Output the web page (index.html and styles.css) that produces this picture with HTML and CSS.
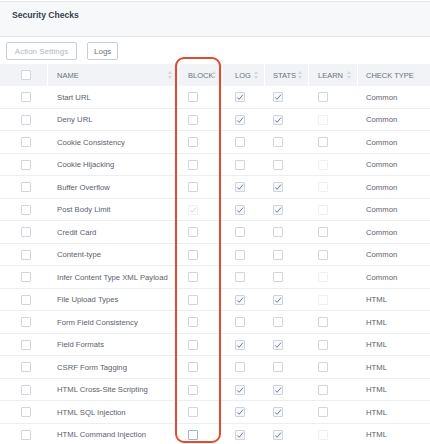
FILE: index.html
```html
<!DOCTYPE html>
<html>
<head>
<meta charset="utf-8">
<link rel="stylesheet" href="styles.css">
</head>
<body>
<div class="page">
  <div class="titlebar">Security Checks</div>
  <div class="toolbar">
    <button class="btn btn-disabled">Action Settings</button>
    <button class="btn">Logs</button>
  </div>
  <div class="table">
    <div class="row head">
      <div class="cell c0"><span class="cb"></span></div>
      <div class="cell cn">NAME<span class="sort"></span></div>
      <div class="cell cb1">BLOCK<span class="sort"></span></div>
      <div class="cell cl">LOG<span class="sort"></span></div>
      <div class="cell cs">STATS<span class="sort"></span></div>
      <div class="cell ce">LEARN<span class="sort"></span></div>
      <div class="cell ct">CHECK TYPE</div>
    </div>
    <div id="rows"></div>
  </div>
  <div class="highlight"></div>
</div>
<script src="script.js"></script>
</body>
</html>
```

FILE: script.js
```js
var data = [
  ["Start URL", "n", "c", "c", "n", "Common"],
  ["Deny URL", "n", "c", "c", "f", "Common"],
  ["Cookie Consistency", "n", "n", "n", "n", "Common"],
  ["Cookie Hijacking", "n", "n", "n", "f", "Common"],
  ["Buffer Overflow", "n", "c", "c", "f", "Common"],
  ["Post Body Limit", "fc", "c", "c", "f", "Common"],
  ["Credit Card", "n", "n", "n", "n", "Common"],
  ["Content-type", "n", "n", "n", "n", "Common"],
  ["Infer Content Type XML Payload", "n", "n", "n", "f", "Common"],
  ["File Upload Types", "n", "c", "c", "f", "HTML"],
  ["Form Field Consistency", "n", "n", "n", "n", "HTML"],
  ["Field Formats", "n", "c", "c", "n", "HTML"],
  ["CSRF Form Tagging", "n", "n", "n", "n", "HTML"],
  ["HTML Cross-Site Scripting", "n", "c", "c", "n", "HTML"],
  ["HTML SQL Injection", "n", "c", "c", "n", "HTML"],
  ["HTML Command Injection", "b", "c", "c", "f", "HTML"]
];
var check = '<svg viewBox="0 0 10 10" width="10" height="10"><polyline points="2.2,5.4 4.1,7.3 8,2.6" fill="none" stroke="currentColor" stroke-width="1"/></svg>';
function box(t) {
  var cls = "cb";
  if (t === "c") cls += " checked";
  if (t === "f") cls += " faded";
  if (t === "fc") cls += " faded checked";
  if (t === "b") cls += " focus";
  var inner = (t === "c" || t === "fc") ? check : "";
  return '<span class="' + cls + '">' + inner + '</span>';
}
var html = "";
data.forEach(function (r) {
  html += '<div class="row">' +
    '<div class="cell c0">' + box("n") + '</div>' +
    '<div class="cell cn">' + r[0] + '</div>' +
    '<div class="cell cb1">' + box(r[1]) + '</div>' +
    '<div class="cell cl">' + box(r[2]) + '</div>' +
    '<div class="cell cs">' + box(r[3]) + '</div>' +
    '<div class="cell ce">' + box(r[4]) + '</div>' +
    '<div class="cell ct">' + r[5] + '</div>' +
    '</div>';
});
document.getElementById("rows").innerHTML = html;
```

FILE: styles.css
```css
* { box-sizing: border-box; }
html, body { margin: 0; padding: 0; background: #ffffff; }
body {
  font-family: "Liberation Sans", Arial, sans-serif;
  color: #5a616c;
  width: 430px;
  height: 444px;
  overflow: hidden;
}
.page { position: relative; width: 430px; height: 444px; padding-top: 1px; }
.titlebar {
  height: 36px;
  border-top: 1px solid #e6e8eb;
  border-bottom: 1px solid #e3e5e8;
  background: #f7f8f9;
  padding: 8px 0 0 12px;
  font-size: 8.6px;
  font-weight: bold;
  color: #39424d;
}
.toolbar {
  height: 27px;
  display: flex;
  align-items: flex-start;
  gap: 10px;
  padding: 5px 0 0 6px;
  background: #ffffff;
}
.btn {
  height: 18px;
  padding: 0 6px;
  border: 1px solid #c6ced8;
  border-radius: 2px;
  background: #ffffff;
  font-family: "Liberation Sans", Arial, sans-serif;
  font-size: 8px;
  color: #6b7480;
}
.btn-disabled { color: #b2bac4; width: 71px; }
.table { width: 430px; }
.row {
  display: grid;
  grid-template-columns: 48px 131px 44px 42px 44px 49px 72px;
  height: 22.5px;
  border-bottom: 1px solid #eceef1;
  font-size: 7.7px;
}
.row.head {
  background: #f1f3f6;
  border-bottom: none;
  color: #6a7280;
  font-size: 7.5px;
  height: 22.4px;
}
.cell {
  display: flex;
  align-items: center;
  padding-left: 9px;
  position: relative;
  white-space: nowrap;
}
.head .cell { border-right: 1px solid #ffffff; }
.head .ct { border-right: none; }
.c0 { padding-left: 21px; }
.cl { padding-left: 12px; }
.cs { padding-left: 8px; }
.ct { padding-left: 8px; }
.sort {
  position: absolute;
  right: 5px;
  top: 7px;
  width: 5px;
  height: 8px;
}
.sort::before, .sort::after {
  content: "";
  position: absolute;
  left: 0;
  border-left: 2.5px solid transparent;
  border-right: 2.5px solid transparent;
}
.sort::before { top: 0; border-bottom: 3px solid #d3d7dd; }
.sort::after { bottom: 0; border-top: 3px solid #d3d7dd; }
.cb {
  display: inline-block;
  width: 10px;
  height: 10px;
  border: 1px solid #d2d6dc;
  border-radius: 1px;
  background: #ffffff;
  position: relative;
  color: #6c7ca0;
}
.cb svg { position: absolute; left: -1px; top: -1px; }
.cb.checked { border-color: #cfd4da; background: #f7f8fa; }
.cb.faded { border-color: #eeeff1; color: #cfd4dc; background: #ffffff; }
.cb.focus { border-color: #9ab6df; }
.highlight {
  position: absolute;
  left: 175px;
  top: 57px;
  width: 46px;
  height: 386px;
  border: 2.5px solid #e64a2e;
  border-radius: 9px;
  pointer-events: none;
}
```
